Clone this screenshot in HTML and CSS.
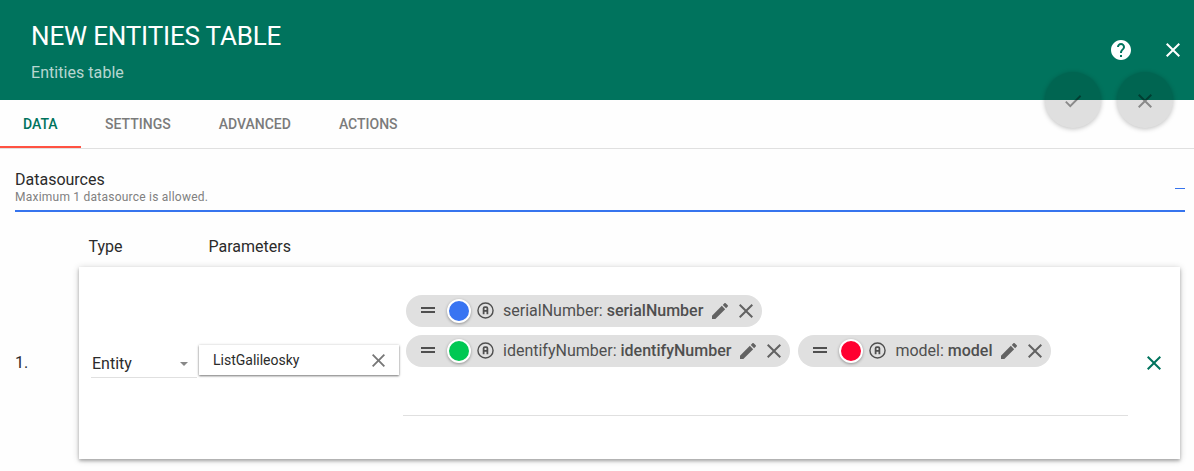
FILE: index.html
```html
<!DOCTYPE html>
<html lang="en">
<head>
<meta charset="utf-8">
<title>New entities table</title>
<link rel="stylesheet" href="styles.css">
</head>
<body>
<svg class="defs" width="0" height="0">
  <symbol id="close" viewBox="0 0 14 14"><path d="M14 1.41 12.59 0 7 5.59 1.41 0 0 1.41 5.59 7 0 12.59 1.41 14 7 8.41 12.59 14 14 12.59 8.41 7z"/></symbol>
  <symbol id="check" viewBox="0 0 24 24"><path d="M9 16.17 4.83 12l-1.42 1.41L9 19 21 7l-1.41-1.41z"/></symbol>
  <symbol id="help" viewBox="0 0 24 24"><path d="M12 2C6.48 2 2 6.48 2 12s4.48 10 10 10 10-4.480 10-10S17.520 2 12 2zm1 17h-2v-2h2v2zm2.070-7.750-.9.920C13.450 12.900 13 13.500 13 15h-2v-.5c0-1.100.450-2.100 1.170-2.830l1.240-1.260c.370-.360.590-.860.590-1.410 0-1.100-.9-2-2-2s-2 .9-2 2H8c0-2.210 1.790-4 4-4s4 1.790 4 4c0 .880-.360 1.680-.930 2.250z"/></symbol>
  <symbol id="drag" viewBox="0 0 14 6"><path d="M0 0h14v1.900H0zM0 4.100h14v1.900H0z"/></symbol>
  <symbol id="edit" viewBox="3 3 18 18"><path d="M3 17.250V21h3.750L17.810 9.940l-3.750-3.750L3 17.250zM20.710 7.040c.390-.390.390-1.020 0-1.410l-2.340-2.340c-.390-.390-1.020-.390-1.410 0l-1.830 1.830 3.750 3.750 1.830-1.830z"/></symbol>
  <symbol id="attribute" viewBox="0 0 18 18"><circle cx="9" cy="9" r="8" fill="none" stroke="currentColor" stroke-width="1.500"/><path d="M7 13V6.600Q7 5.400 8.200 5.400H9.800Q11 5.400 11 6.600V13M7 9.300H11" fill="none" stroke="currentColor" stroke-width="1.900"/></symbol>
</svg>

<header class="toolbar">
  <div class="heading">
    <h1 class="title">NEW ENTITIES TABLE</h1>
    <div class="subtitle">Entities table</div>
  </div>
  <svg class="help"><use href="#help"/></svg>
  <svg class="dismiss"><use href="#close"/></svg>
  <div class="fabs">
    <div class="fab"><svg class="check"><use href="#check"/></svg></div>
    <div class="fab"><svg class="cross"><use href="#close"/></svg></div>
  </div>
</header>

<nav class="tabs">
  <div class="tab active">DATA</div>
  <div class="tab">SETTINGS</div>
  <div class="tab">ADVANCED</div>
  <div class="tab">ACTIONS</div>
</nav>

<main class="content">
  <section class="panel-header">
    <div>
      <div class="panel-title">Datasources</div>
      <div class="hint">Maximum 1 datasource is allowed.</div>
    </div>
    <div class="collapse"></div>
  </section>
  <div class="columns"><div class="col-type">Type</div><div>Parameters</div></div>
  <div class="row">
    <div class="index">1.</div>
    <div class="card">
      <div class="select"><span>Entity</span><i class="caret"></i></div>
      <div class="entity"><span>ListGalileosky</span><svg class="clear"><use href="#close"/></svg></div>
      <div class="chips">
        <div class="chip"><svg class="drag"><use href="#drag"/></svg><i class="dot blue"></i><svg class="attr"><use href="#attribute"/></svg><span class="label">serialNumber: <b>serialNumber</b></span><svg class="edit"><use href="#edit"/></svg><svg class="remove"><use href="#close"/></svg></div>
        <div class="chip"><svg class="drag"><use href="#drag"/></svg><i class="dot green"></i><svg class="attr"><use href="#attribute"/></svg><span class="label">identifyNumber: <b>identifyNumber</b></span><svg class="edit"><use href="#edit"/></svg><svg class="remove"><use href="#close"/></svg></div>
        <div class="chip"><svg class="drag"><use href="#drag"/></svg><i class="dot red"></i><svg class="attr"><use href="#attribute"/></svg><span class="label">model: <b>model</b></span><svg class="edit"><use href="#edit"/></svg><svg class="remove"><use href="#close"/></svg></div>
      </div>
      <svg class="delete"><use href="#close"/></svg>
    </div>
  </div>
</main>
</body>
</html>
```
FILE: styles.css
```css
* { box-sizing: border-box; }
body { margin: 0; height: 471px; overflow: hidden; background: #fefefe; color: #2b2b2b; font: 16px/20px Roboto, sans-serif; }
svg { display: block; flex: none; fill: currentColor; }
.defs { position: absolute; }

.toolbar { position: relative; display: flex; align-items: center; height: 100px; padding: 0 14px 0 31px; background: #00735d; color: #fff; }
.heading { flex: 1; height: 100px; padding-top: 20px; }
.title { margin: 0; font-size: 26px; font-weight: 400; line-height: 32px; letter-spacing: -.17px; }
.subtitle { margin-top: 11px; color: rgba(255,255,255,.72); letter-spacing: .05px; }
.help { width: 24px; height: 24px; margin-right: 33px; }
.dismiss { width: 14px; height: 14px; }
.fabs { position: absolute; z-index: 2; top: 72px; right: 21px; display: flex; gap: 16px; }
.fab { display: grid; place-items: center; width: 56px; height: 56px; border-radius: 50%; background: rgba(0,0,0,.12); color: rgba(0,0,0,.38); box-shadow: 0 1px 5px rgba(0,0,0,.26); }
.check { width: 22px; height: 22px; margin-top: 2px; }
.cross { width: 14px; height: 14px; margin-top: 2px; }

.tabs { display: flex; height: 49px; padding-right: 12px; border-bottom: 1px solid #e0e0e0; }
.tab { padding: 14px 24px 0 24px; color: #7b7b7b; font-size: 14px; font-weight: 500; }
.tab.active { padding: 14px 23.500px 0 23px; color: #00735d; border-bottom: 2px solid #ff5242; }

.content { padding: 0 9px 0 15px; }
.panel-header { display: flex; justify-content: space-between; height: 63px; padding-top: 21px; border-bottom: 2px solid #3674ee; }
.hint { color: #808080; font-size: 12px; line-height: 14px; letter-spacing: .23px; }
.collapse { width: 10px; height: 1px; margin-top: 18px; background: #3674ee; }
.columns { display: flex; height: 55px; padding: 25px 0 0 73.500px; }
.col-type { width: 120px; }
.row { display: flex; align-items: center; padding-right: 5px; }
.index { width: 64px; }
.card { display: flex; flex: 1; height: 192px; padding: 0 19px 0 12px; background: #fff; box-shadow: 0 1px 7px rgba(0,0,0,.2), 0 2px 3px rgba(0,0,0,.25); }
.select { display: flex; justify-content: space-between; align-items: center; width: 106px; height: 24px; margin: 87px 2px 0 0; padding: 0 9px 4px 1px; border-bottom: 1px solid #e0e0e0; }
.caret { border: 4px solid transparent; border-top-color: #888; border-bottom: 0; }
.entity { display: flex; align-items: center; justify-content: space-between; width: 200px; height: 30px; margin-top: 78px; padding: 0 14px; font-size: 14px; box-shadow: 0 1px 2px rgba(0,0,0,.5), 0 0 3px rgba(0,0,0,.12); }
.clear { width: 13px; height: 13px; color: #777; }
.chips { display: flex; flex-wrap: wrap; align-content: flex-start; gap: 8px; width: 725px; height: 149px; margin-left: 4px; padding: 28px 0 0 3px; border-bottom: 1px solid #e0e0e0; }
.chip { display: flex; align-items: center; height: 32px; padding: 0 9px 0 15px; border-radius: 16px; background: #e0e0e0; color: #4f4f4f; }
.drag { width: 14px; height: 6px; margin-bottom: 2px; }
.dot { flex: none; width: 24px; height: 24px; margin: 0 6px 0 12px; border: 2px solid #fff; border-radius: 50%; box-shadow: 0 1px 3px rgba(0,0,0,.35); }
.blue { background: #3874f2; }
.green { background: #00c853; }
.red { background: #ff0030; }
.attr { width: 17px; height: 17px; margin: 0 9px 1px 0; }
.label { white-space: nowrap; }
.label b { font-weight: 500; }
.edit { width: 16px; height: 16px; margin: 0 11.500px 0 8.500px; color: #626262; }
.remove { width: 14px; height: 14px; color: #626262; }
.delete { width: 14px; height: 14px; margin: 89px 0 0 auto; color: #00735d; }
```
